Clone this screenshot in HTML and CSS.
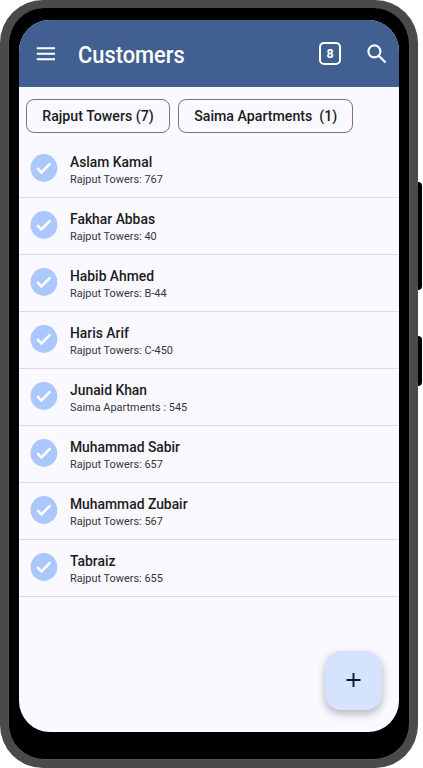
FILE: index.html
```html
<!DOCTYPE html>
<html lang="en">

<head>
    <meta charset="UTF-8">
    <meta name="viewport" content="width=device-width, initial-scale=1.0">
    <title>Customers</title>
    <link rel="stylesheet" href="styles.css">
</head>

<body>
    <div class="phone">
        <span class="side-button volume"></span>
        <span class="side-button power"></span>
        <div class="bezel">
            <div class="screen">
                <header>
                    <svg class="menu-icon" viewBox="0 0 19 14">
                        <path d="M0.8 1.2H19M0.8 6.7H19M0.8 12.2H19" />
                    </svg>
                    <h1>Customers</h1>
                    <span class="count">8</span>
                    <svg class="search-icon" viewBox="0 0 20 20">
                        <circle cx="7.4" cy="7.4" r="6" />
                        <path d="M11.7 11.7L18.6 18.6" />
                    </svg>
                </header>
                <div class="filters">
                    <button class="chip towers"><span>Rajput Towers (7)</span></button>
                    <button class="chip apartments"><span>Saima Apartments &nbsp;(1)</span></button>
                </div>
                <ul id="customerList"></ul>
                <button class="add-button" aria-label="Add customer">
                    <svg viewBox="0 0 16 16">
                        <path d="M8 0.5V15.5M0.5 8H15.5" />
                    </svg>
                </button>
            </div>
        </div>
    </div>
    <script src="script.js"></script>
</body>

</html>
```
FILE: styles.css
```css
* {
    box-sizing: border-box;
}

body {
    font-family: Roboto, sans-serif;
    margin: 0;
    background-color: #fff;
    overflow: hidden;
}

.phone {
    position: relative;
    width: 418px;
    height: 768px;
    padding: 8px;
    background-color: #4a4a4a;
    border-radius: 43px;
}

.side-button {
    position: absolute;
    left: 418px;
    width: 4px;
    background-color: #000;
    border-radius: 0 4px 4px 0;
}

.volume {
    top: 182px;
    height: 108px;
}

.power {
    top: 336px;
    height: 50px;
}

.bezel {
    height: 752px;
    padding: 12px 10px 27px;
    background-color: #000;
    border: 1px solid #555;
    border-width: 0 1px 1px;
    border-radius: 36px;
}

.screen {
    position: relative;
    height: 712px;
    background-color: #faf9ff;
    border-radius: 31px;
    overflow: hidden;
}

header {
    display: flex;
    align-items: center;
    height: 67px;
    padding: 0 12px 0 17px;
    background-color: #415f91;
    color: #fff;
}

header svg {
    fill: none;
    stroke: #fff;
    stroke-width: 2;
}

.menu-icon {
    width: 19px;
    height: 14px;
}

h1 {
    flex: 1;
    margin: 2px 0 0 23px;
    font-size: 24px;
    font-weight: 500;
    line-height: 28px;
    transform: scaleX(0.91);
    transform-origin: left;
}

.count {
    width: 22px;
    height: 23px;
    border: 2px solid #fff;
    border-radius: 5px;
    font-size: 12.5px;
    font-weight: 700;
    line-height: 20px;
    text-align: center;
}

header .search-icon {
    width: 20px;
    height: 20px;
    margin-left: 26px;
    stroke-width: 2.1;
}

.filters {
    display: flex;
    gap: 8px;
    padding: 12px 7px 8px;
}

.chip {
    display: flex;
    align-items: center;
    justify-content: center;
    height: 34px;
    padding: 0;
    background: none;
    border: 1px solid #74777f;
    border-radius: 8px;
    color: #191c20;
    font-family: inherit;
    font-size: 15px;
    font-weight: 500;
    white-space: nowrap;
}

.chip span {
    transform: scaleX(0.945);
}

.towers {
    width: 144px;
}

.apartments {
    width: 175px;
}

ul {
    list-style: none;
    margin: 0;
    padding: 0;
}

li {
    display: flex;
    align-items: center;
    height: 57px;
    padding-left: 11px;
    border-bottom: 1px solid #dcdce2;
}

.check-icon {
    width: 28px;
    height: 28px;
    margin: 0 12px 2px 0;
}

.check-icon ellipse {
    fill: #aac7ff;
}

.check-icon path {
    fill: none;
    stroke: #fff;
    stroke-width: 2.6;
}

.customer {
    padding-top: 1px;
    transform: scaleX(0.95);
    transform-origin: left;
}

.name {
    color: #191c20;
    font-size: 14.6px;
    font-weight: 500;
    line-height: 18px;
}

.address {
    color: #34363b;
    font-size: 11.5px;
    line-height: 16px;
}

.add-button {
    position: absolute;
    right: 17px;
    bottom: 22px;
    display: flex;
    align-items: center;
    justify-content: center;
    width: 57px;
    height: 59px;
    padding: 0 1px 1px 0;
    background-color: #d6e3ff;
    border: none;
    border-radius: 16px;
    box-shadow: 0 4px 8px rgba(0, 0, 0, 0.27);
}

.add-button svg {
    width: 15px;
    height: 16px;
    fill: none;
    stroke: #001b3e;
    stroke-width: 2;
}
```
FILE: script.js
```js
const customers = [
    { name: 'Aslam Kamal', address: 'Rajput Towers: 767' },
    { name: 'Fakhar Abbas', address: 'Rajput Towers: 40' },
    { name: 'Habib Ahmed', address: 'Rajput Towers: B-44' },
    { name: 'Haris Arif', address: 'Rajput Towers: C-450' },
    { name: 'Junaid Khan', address: 'Saima Apartments : 545' },
    { name: 'Muhammad Sabir', address: 'Rajput Towers: 657' },
    { name: 'Muhammad Zubair', address: 'Rajput Towers: 567' },
    { name: 'Tabraiz', address: 'Rajput Towers: 655' }
];

document.getElementById('customerList').innerHTML = customers.map(customer => `
    <li>
        <svg class="check-icon" viewBox="0 0 28 28">
            <ellipse cx="13.9" cy="14" rx="13.4" ry="13.9" />
            <path d="M7.2 14.2L11.4 18.5L20.4 9.3" />
        </svg>
        <div class="customer">
            <div class="name">${customer.name}</div>
            <div class="address">${customer.address}</div>
        </div>
    </li>
`).join('');
```
